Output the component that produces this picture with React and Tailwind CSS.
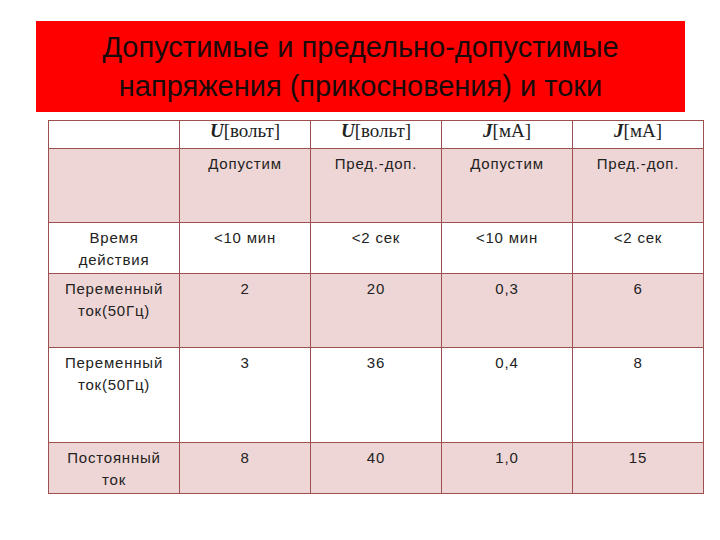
const rows = [
  { label: ['Время', 'действия'], values: ['<10 мин', '<2 сек', '<10 мин', '<2 сек'], h: 'h-[51px]', pink: false },
  { label: ['Переменный', 'ток(50Гц)'], values: ['2', '20', '0,3', '6'], h: 'h-[74px]', pink: true },
  { label: ['Переменный', 'ток(50Гц)'], values: ['3', '36', '0,4', '8'], h: 'h-[95px]', pink: false },
  { label: ['Постоянный', 'ток'], values: ['8', '40', '1,0', '15'], h: 'h-[51px]', pink: true },
]

function Unit({ sym, unit }) {
  return (
    <span className="font-['Liberation_Serif',serif] text-[19px] leading-[20px] tracking-normal text-[#222]">
      <span className="font-bold italic">{sym}</span>[{unit}]
    </span>
  )
}

export default function App() {
  const cell = 'border border-[#9c5050] text-center align-top w-[131px]'
  return (
    <div className="min-h-screen w-[720px] h-[540px] bg-white pt-[21px] font-['Liberation_Sans',Arial,sans-serif]">
      {/* Title */}
      <div className="ml-[36px] flex h-[91px] w-[649px] flex-col items-center justify-center bg-[#ff0000] text-[29px] leading-[39px] text-[#1a0a0a]">
        <div>Допустимые и предельно-допустимые</div>
        <div>напряжения (прикосновения) и токи</div>
      </div>

      {/* Table */}
      <table className="ml-[48px] mt-[8px] border-collapse text-[15px] leading-[22px] tracking-[0.8px] text-[#222]">
        <tbody>
          <tr className="h-[28px] bg-white">
            <td className={cell}></td>
            <td className={cell + ' align-middle'}><Unit sym="U" unit="вольт" /></td>
            <td className={cell + ' align-middle'}><Unit sym="U" unit="вольт" /></td>
            <td className={cell + ' align-middle'}><Unit sym="J" unit="мА" /></td>
            <td className={cell + ' align-middle'}><Unit sym="J" unit="мА" /></td>
          </tr>
          <tr className="h-[74px] bg-[#efd6d6]">
            <td className={cell}></td>
            <td className={cell + ' pt-[4px]'}>Допустим</td>
            <td className={cell + ' pt-[4px]'}>Пред.-доп.</td>
            <td className={cell + ' pt-[4px]'}>Допустим</td>
            <td className={cell + ' pt-[4px]'}>Пред.-доп.</td>
          </tr>
          {rows.map((r, i) => (
            <tr key={i} className={r.h + ' ' + (r.pink ? 'bg-[#efd6d6]' : 'bg-white')}>
              <td className={cell + ' pt-[4px]'}>
                {r.label.map((l, j) => <div key={j}>{l}</div>)}
              </td>
              {r.values.map((v, j) => (
                <td key={j} className={cell + ' pt-[4px]'}>{v}</td>
              ))}
            </tr>
          ))}
        </tbody>
      </table>
    </div>
  )
}
